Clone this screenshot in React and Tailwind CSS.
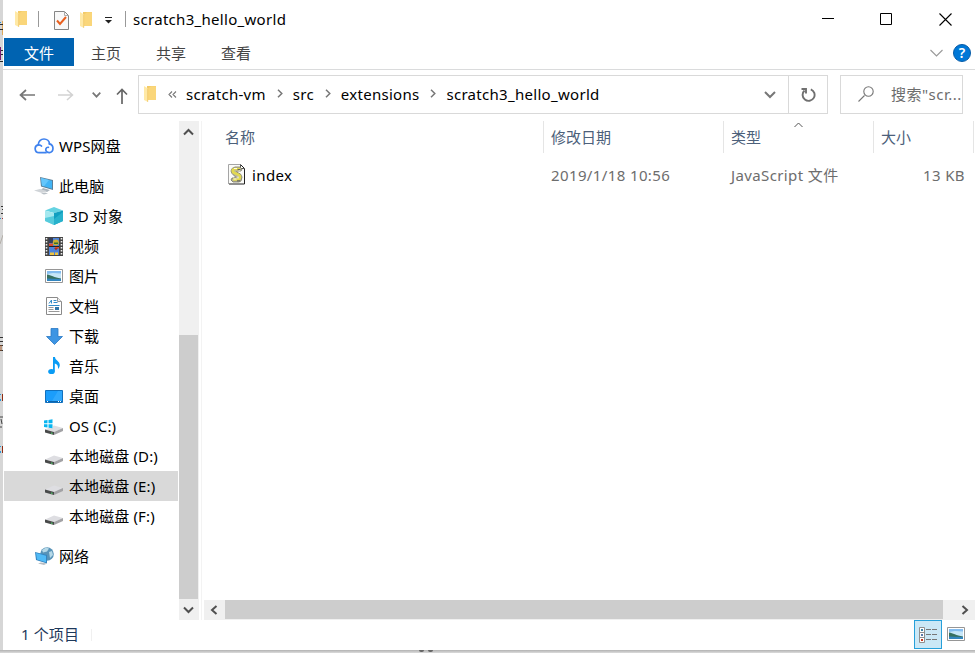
const FolderIcon = ({ className = '' }) => (
    <svg width="14" height="18" viewBox="0 0 14 18" className={`shrink-0 ${className}`}>
        <path d="M4 1h9v14H4z" fill="#f3cb68" />
        <path d="M5 3.5L8 1.200H13v13.800H5z" fill="#fad67a" />
        <path d="M1 1l4 2.500V17L1 15z" fill="#ffe9a6" />
        <path d="M4.700 3.500V16.800" stroke="#edc463" strokeWidth=".8" />
    </svg>
);

// Simple stroked glyph used for every arrow and chevron
const Stroke = ({ d, w, h, color = '#666', width = 1.5, className = '' }) => (
    <svg width={w} height={h} viewBox={`0 0 ${w} ${h}`} className={`shrink-0 ${className}`}>
        <path d={d} fill="none" stroke={color} strokeWidth={width} />
    </svg>
);

const CloudIcon = () => (
    <svg width="20" height="18" viewBox="0 0 20 18" fill="none" stroke="#3f82ee" strokeWidth="1.700" strokeLinecap="round">
        <path d="M12 15.700H5a4 4 0 0 1-.7-7.900C4.300 4.500 6.800 2 10 2c3 0 5.300 2.200 5.500 4.900" />
        <path d="M4.300 7.800c1.400-.1 2.500.3 3.200 1.200" />
        <path d="M15.300 6.900a4.500 4.500 0 0 1 .2 8.800c-2.500 0-4-1.500-3.700-3.500.3-1.400 1.400-2.200 2.600-1.900" />
    </svg>
);

const ComputerIcon = () => (
    <svg width="20" height="18" viewBox="0 0 20 18">
        <path d="M6 0l13 3v10L7 9.500z" fill="#5b7f98" />
        <path d="M7 1l11 2.700v8L8 8.800z" fill="#42b4f5" />
        <path d="M7 1l8 2-5 6.300-2-.5z" fill="#65c6fb" />
        <path d="M9 11l7 2-3 2-6-2z" fill="#aab4bc" />
        <path d="M0 13.500L6 12l7 2-5 2z" fill="#d0d4d8" />
        <path d="M7 16.500l4-1 3 1-4 1z" fill="#b8bfc5" />
    </svg>
);

const CubeIcon = () => (
    <svg width="18" height="18" viewBox="0 0 18 18">
        <path d="M0 3.500L9 0l9 3.500L9 6z" fill="#65d3e2" />
        <path d="M0 3.500L9 6v12l-9-4z" fill="#a5e8ef" />
        <path d="M18 3.500L9 6v12l9-4z" fill="#119fc0" />
        <path d="M0 11l9-2v9l-9-4z" fill="#56cbdc" />
        <path d="M9 12l9-7v9l-9 4z" fill="#27b2cc" />
    </svg>
);

const VideoIcon = () => (
    <svg width="18" height="19" viewBox="0 0 18 19">
        <path d="M0 0h18v19H0z" fill="#444" />
        <path d="M1.500 1v18M16.500 1v18" stroke="#eee" strokeWidth="1.600" strokeDasharray="1.600 1.400" />
        <path d="M4 1h10v8H4zM4 10h10v8H4z" fill="#4c83dc" />
        <path d="M4 1h4v5H4z" fill="#36405c" />
        <path d="M4 6.500h4V9H4zM10 10h4v1.500h-4z" fill="#e04b2d" />
        <circle cx="10.800" cy="5.500" r="3" fill="#cfae2e" />
        <path d="M9 5.500h4v1.500H9z" fill="#2e7035" />
        <path d="M9 11h4l-2 2.500z" fill="#a83222" />
        <path d="M5 15.500h4V18H5zM10 15.500h3V18h-3z" fill="#efc541" />
        <path d="M4 9.500h10" stroke="#222" />
    </svg>
);

const PictureIcon = ({ w = 18, h = 14 }) => (
    <svg width={w} height={h} viewBox="0 0 18 14">
        <path d="M.5.500h17v13H.5z" fill="#fff" stroke="#969696" />
        <path d="M2 2h14v10H2z" fill="#c6e6f8" />
        <path d="M2 2h14v2.500L8 4 2 5z" fill="#84bdf0" />
        <path d="M2 5.500c4 .5 7 3 14 4V11H2z" fill="#37705f" />
        <path d="M2 9.500l6 .2 8 .3v2H2z" fill="#3285bf" />
    </svg>
);

const DocIcon = () => (
    <svg width="16" height="18" viewBox="0 0 16 18">
        <path d="M.5.500h11l4 4v13H.5z" fill="#fff" stroke="#8a8a8a" />
        <path d="M11.500.500v4h4" fill="#eee" stroke="#999" />
        <path d="M3 6.500l2.500-3.500v3.500M7.500 3.500h3M7.500 5.500h4M2.500 8.500h11" fill="none" stroke="#338bc8" />
        <path d="M2.500 10.500h5M2.500 12.500h5M2.500 14.500h11" stroke="#999" />
        <path d="M9 10h4v3H9z" fill="#3276a8" />
    </svg>
);

const DownloadIcon = () => (
    <svg width="17" height="17" viewBox="0 0 17 17">
        <path d="M5 .500h7v8h4.500l-8 8-8-8H5z" fill="#3d95e3" stroke="#2878c5" strokeWidth=".8" />
    </svg>
);

const MusicIcon = () => (
    <svg width="12" height="18" viewBox="0 0 12 18" fill="#0a9cf5">
        <ellipse cx="3.500" cy="14.500" rx="3.300" ry="2.600" />
        <path d="M5 0h2c.2 3.500 4.800 4 4.800 8 0 1.500-.8 3-1.800 4 .3-3-.7-5-3.200-5.500v8H5z" />
    </svg>
);

const DesktopIcon = () => (
    <svg width="18" height="13" viewBox="0 0 18 13">
        <path d="M.5.500h17v12H.5z" fill="#1b9dfb" stroke="#1270bd" />
        <path d="M13 1h4v10H7z" fill="#45b3ff" opacity=".5" />
        <path d="M1 11.500h16" stroke="#0c65ad" />
        <path d="M2 11.500h1M13 11.500h1M15 11.500h1" stroke="#fff" />
    </svg>
);

const DriveIcon = ({ windows }) => (
    <svg width="20" height="16" viewBox="0 0 20 16" className="mt-px">
        <path d="M1 10.500l9-4 9 2.500-9 4z" fill="#dedee2" />
        <path d="M1 10.500l9 2.500v3L1 13.500z" fill="#484a4a" />
        <path d="M10 13l9-4v3L10 16z" fill="#a2a2a5" />
        <path d="M7 14l1.500.4" stroke="#4fd06a" strokeWidth="1.200" />
        {windows && (
            <>
                <path d="M0 0h9v9H0z" fill="#fff" />
                <path d="M0 1.500L3.500 1v3.300H0zM4.500.900L8.500.300v4h-4zM0 5.300h3.500v3.300L0 8zM4.500 5.300h4v4l-4-.6z" fill="#09b5f0" />
            </>
        )}
    </svg>
);

const NetworkIcon = () => (
    <svg width="19" height="18" viewBox="0 0 19 18">
        <circle cx="12" cy="7" r="6.800" fill="#5893b8" />
        <path d="M7 3l4-2.500 3 1-2 3-4 1zM14 5l3-1 1 4-3 3z" fill="#b6d9e8" />
        <path d="M0 5l12 3v8.500L1 13z" fill="#3484bf" />
        <path d="M1 6l10 2.700v6.500L2 12.500z" fill="#50baf6" />
        <path d="M6 15.500l6 1-3 1.500-6-1.500z" fill="#b7bec4" />
    </svg>
);

const ScriptIcon = () => (
    <svg width="18" height="21" viewBox="0 0 18 21" className="mb-0.5">
        <path d="M1 .500h11.500l4 4V20H1z" fill="#fbfbf8" />
        <path d="M.5 20V.500H12" fill="none" stroke="#a5a5a5" />
        <path d="M12.500.500l4 4V20H1" fill="none" stroke="#222" />
        <path d="M12.500.500v4h4" fill="none" stroke="#555" />
        <path d="M4 4.500l3-1.500h5l2 2-1 2H9.500l-1 1 4 2 1.500 3-1 4-2 1H5l-2-2 1-2h3v-1.500L4 9.500 3 7z" fill="#b5b3a0" stroke="#77755c" strokeWidth=".8" />
        <path d="M12 5H7C4 5 4 8 6.500 9l3 1.200c3.500 1.200 3 5.300 0 5.300H5" fill="none" stroke="#e2d94f" strokeWidth="2.600" />
        <path d="M6 4.500h3M10.500 6h2M5.500 15h3M10 12.500v2" stroke="#fff" strokeWidth=".9" />
        <path d="M9.500 5.500h3M9 16.800h3" stroke="#555" strokeWidth=".9" />
    </svg>
);

const places = [
    { name: '3D 对象', icon: <CubeIcon /> },
    { name: '视频', icon: <VideoIcon /> },
    { name: '图片', icon: <PictureIcon /> },
    { name: '文档', icon: <DocIcon /> },
    { name: '下载', icon: <DownloadIcon /> },
    { name: '音乐', icon: <MusicIcon /> },
    { name: '桌面', icon: <DesktopIcon /> },
    { name: 'OS (C:)', icon: <DriveIcon windows /> },
    { name: '本地磁盘 (D:)', icon: <DriveIcon /> },
    { name: '本地磁盘 (E:)', icon: <DriveIcon />, active: true },
    { name: '本地磁盘 (F:)', icon: <DriveIcon /> },
];

const NavItem = ({ icon, name, root, active }) => (
    <div className={`flex h-[30px] w-[174px] items-center ${root ? 'pl-[29px]' : 'pl-[39px]'} ${active ? 'bg-[#d9d9d9]' : ''}`}>
        <span className="flex w-[22px] shrink-0 justify-center">{icon}</span>
        <span className="ml-1 whitespace-nowrap tracking-[0.12px]">{name}</span>
    </div>
);

const TitleBar = () => (
    <header className="flex h-[38px] shrink-0 items-center">
        <FolderIcon className="ml-[11px]" />
        <span className="ml-[10px] h-4 w-px bg-[#999]" />
        <svg width="15" height="19" viewBox="0 0 15 19" className="ml-[15px] mt-0.5">
            <path d="M.5.500h10l4 4v14H.5z" fill="#f8f8f8" stroke="#858585" />
            <path d="M10.500.500v4h4" fill="none" stroke="#aaa" />
            <path d="M3 9.500l3 3.500 6-7" fill="none" stroke="#e9601f" strokeWidth="2" />
        </svg>
        <FolderIcon className="ml-[10px] mt-0.5" />
        <svg width="8" height="7" viewBox="0 0 8 7" className="ml-3 mt-0.5">
            <path d="M0 .500h7" stroke="#222" />
            <path d="M0 3h7L3.500 6.500z" fill="#222" />
        </svg>
        <span className="ml-[12px] h-4 w-px bg-[#999]" />
        <h1 className="ml-[7px] tracking-[0.3px]">scratch3_hello_world</h1>
        <div className="ml-auto flex items-center pr-[23px]">
            <Stroke w={12} h={12} d="M0 5.500h12" color="#000" width={1} />
            <Stroke w={12} h={12} d="M.5.500h11v11H.5z" color="#000" width={1} className="ml-[46px]" />
            <Stroke w={13} h={13} d="M.5.500l12 12M12.500.500l-12 12" color="#000" width={1.1} className="ml-[47px]" />
        </div>
    </header>
);

const Ribbon = () => (
    <nav className="flex h-8 shrink-0 items-center border-b border-[#dadbdc] pb-0.5 pl-px text-[#444]">
        <span className="flex h-7 w-[70px] items-center justify-center self-start bg-[#0063b1] pt-px text-white">文件</span>
        <span className="ml-[17px]">主页</span>
        <span className="ml-[35px]">共享</span>
        <span className="ml-[35px]">查看</span>
        <Stroke w={13} h={8} d="M.5 1l6 6 6-6" color="#999" width={1.1} className="ml-auto" />
        <span className="ml-[10px] mr-1 flex size-[18px] items-center justify-center rounded-full border border-[#075ca8] bg-[#0078d7] text-[14px] font-semibold text-white">?</span>
    </nav>
);

const Crumb = ({ children }) => (
    <>
        <span className="mb-0.5 tracking-[0.27px]">{children}</span>
        <Stroke w={6} h={9} d="M1 .700l3.800 3.800L1 8.300" color="#777" className="mb-[3px] ml-[11px] mr-[10px]" />
    </>
);

const AddressBar = () => (
    <div className="flex h-[51px] shrink-0 pt-[5px]">
        <div className="flex h-[39px] w-[135px] items-center">
            <Stroke w={16} h={12} d="M7 1L1.500 6 7 11M2 6h14" color="#777" width={1.7} className="ml-[16px]" />
            <Stroke w={16} h={12} d="M9 1l5.500 5L9 11M14 6H0" color="#d2d2d2" className="ml-[23px]" />
            <Stroke w={9} h={6} d="M.7.700l3.800 4L8.300.700" color="#777" width={1.7} className="ml-[18px]" />
            <Stroke w={12} h={16} d="M1 6.500L6 1.500l5 5M6 2v14" color="#666" width={1.7} className="ml-[15px] mt-0.5" />
        </div>
        <div className="flex h-[39px] w-[690px] items-center border border-[#d9d9d9] pl-1">
            <FolderIcon className="mb-0.5" />
            <Stroke w={9} h={7} d="M4 .500l-3 3 3 3M8 .500l-3 3 3 3" color="#777" width={1.1} className="ml-[11px]" />
            <span className="w-[9px]" />
            <Crumb>scratch-vm</Crumb>
            <Crumb>src</Crumb>
            <Crumb>extensions</Crumb>
            <span className="mb-0.5 tracking-[0.3px]">scratch3_hello_world</span>
            <Stroke w={12} h={8} d="M1 1l5 5 5-5" color="#777" width={2} className="ml-auto mr-3" />
            <div className="flex h-full w-[39px] items-center justify-center border-l border-[#d9d9d9]">
                <svg width="16" height="16" viewBox="0 0 16 16" fill="none" stroke="#707070" strokeWidth="1.900">
                    <path d="M10.800 2.300A6 6 0 1 1 4.500 3.500M1.500 2h4.500v4.500" />
                </svg>
            </div>
        </div>
        <div className="ml-3 flex h-[39px] w-[123px] items-center overflow-hidden whitespace-nowrap border border-[#d9d9d9] pl-[17px] text-[#6d6d6d]">
            <Stroke w={16} h={16} d="M6.500 9.500L.500 15.500M10.500 .800a4.700 4.700 0 1 1 0 9.400 4.700 4.700 0 0 1 0-9.400" color="#777" width={1.1} className="mb-0.5" />
            <span className="mb-0.5 ml-[17px] tracking-[0.5px]">搜索"scr...</span>
        </div>
    </div>
);

const NavPane = () => (
    <aside className="flex w-[196px] shrink-0">
        <div className="w-[176px] pl-px pt-[10px]">
            <NavItem root icon={<CloudIcon />} name="WPS网盘" />
            <div className="h-[10px]" />
            <NavItem root icon={<ComputerIcon />} name="此电脑" />
            {places.map((p) => (
                <NavItem key={p.name} {...p} />
            ))}
            <div className="h-[10px]" />
            <NavItem root icon={<NetworkIcon />} name="网络" />
        </div>
        <div className="flex w-5 flex-col bg-[#f0f0f0]">
            <div className="flex h-[214px] pl-1 pt-[7px]">
                <Stroke w={11} h={8} d="M1 6.500L5.500 2 10 6.500" color="#505050" width={2} />
            </div>
            <div className="h-[264px] w-[19px] bg-[#cdcdcd]" />
            <div className="flex h-[21px] items-center pl-1">
                <Stroke w={11} h={8} d="M1 1.500L5.500 6 10 1.500" color="#505050" width={2} />
            </div>
        </div>
    </aside>
);

const FilePane = () => (
    <main className="ml-0.5 flex w-[774px] flex-col border-l border-[#f3f3f3]">
        <div className="flex h-8 text-[#4c607a]">
            <div className="flex w-[342px] items-center border-r border-[#e5e5e5] pl-[23px]">名称</div>
            <div className="flex w-[180px] items-center border-r border-[#e5e5e5] pl-[7px]">修改日期</div>
            <div className="relative flex w-[150px] items-center border-r border-[#e5e5e5] pl-[7px]">
                类型
                <Stroke w={9} h={6} d="M.5 5l4-4 4 4" color="#555" width={1} className="absolute left-[70px] top-px" />
            </div>
            <div className="flex w-[100px] items-center border-r border-[#e5e5e5] pl-[7px]">大小</div>
        </div>
        <div className="flex h-11 items-center tracking-[0.38px] text-[#6d6d6d]">
            <div className="flex w-[342px] items-center pl-[26px] text-black">
                <ScriptIcon />
                <span className="ml-1.5">index</span>
            </div>
            <div className="w-[180px] pl-[7px]">2019/1/18 10:56</div>
            <div className="w-[150px] pl-[7px]">JavaScript 文件</div>
            <div className="w-[91px] text-right">13 KB</div>
        </div>
        <div className="mt-auto ml-0.5 flex h-5 items-center bg-[#f0f0f0]">
            <div className="flex w-[21px] pl-1.5">
                <Stroke w={8} h={10} d="M6.500 1L2 5l4.500 4" color="#505050" width={2} />
            </div>
            <div className="h-[19px] w-[718px] self-start bg-[#cdcdcd]" />
            <Stroke w={8} h={10} d="M1.500 1L6 5 1.500 9" color="#505050" width={2} className="ml-[18px]" />
        </div>
    </main>
);

const StatusBar = () => (
    <footer className="flex h-[30px] shrink-0 items-center text-[#1e395b]">
        <span className="mb-0.5 ml-[18px] tracking-[0.1px]">1 个项目</span>
        <span className="ml-3 h-3 w-px bg-[#f0f0f0]" />
        <div className="ml-auto flex h-[29px] w-7 items-center justify-center self-start border border-[#26a0da] bg-[#cbe8f6]">
            <svg width="18" height="16" viewBox="0 0 18 16">
                <path d="M.5.500h5v15h-5zM.5 5.500h5M.5 10.500h5" fill="#fff" stroke="#8f8f8f" />
                <path d="M2 2h2v2H2z" fill="#3d84a8" />
                <path d="M2 7h2v2H2z" fill="#5b7bab" />
                <path d="M2 12h2v2H2z" fill="#c9341e" />
                <path d="M7 2.500h5M13 2.500h5M7 7.500h5M13 7.500h5M7 12.500h5M13 12.500h5" stroke="#777" />
            </svg>
        </div>
        <span className="mb-0.5 ml-[5px] mr-[10px]"><PictureIcon /></span>
    </footer>
);

// Sliver of the window that lies behind, only a few pixels of it show
const BackEdge = () => (
    <svg width="3" height="650" viewBox="0 0 3 650" className="shrink-0 bg-[#d6d6d6]">
        <path d="M2 21h1v14H2z" fill="#dca85c" />
        <path d="M0 22h1v1H0zM0 218h1v1H0z" fill="#2c8fce" />
        <path d="M0 24h3v1H0zM0 29h3v1H0zM0 50h3v1H0zM0 54h3v1H0zM0 61h3v1H0z" fill="#2a2a2a" />
        <path d="M0 47h1v13H0z" fill="#7a1b73" />
        <path d="M1 206h2v1H1zM2 209h1v1H2zM1 213h2v1H1zM0 337h3v1H0zM0 341h3v1H0zM0 345h3v1H0zM0 350h3v1H0z" fill="#333" />
        <path d="M2 218h1v1H2z" fill="#a33" />
        <path d="M3 235L0 244" stroke="#b5b0aa" />
        <path d="M0 345h2v6H0z" fill="#a05a2c" opacity=".5" />
        <path d="M0 394h1v1H0zM0 399h1v2H0zM0 446h1v1H0zM0 451h1v2H0z" fill="#2c9ada" />
        <path d="M2 394h1v7H2zM2 446h1v7H2z" fill="#8f2d14" />
        <path d="M0 417h3M1 419l1 5M0 427h2" stroke="#444" />
    </svg>
);

export default function App() {
    return (
        <div className="flex h-[653px] w-[975px] flex-col overflow-hidden bg-[#c9c9c9] font-['Noto_Sans','Noto_Sans_CJK_SC',sans-serif] text-[15px] leading-5 text-black">
            <div className="flex h-[650px] shrink-0">
                <BackEdge />
                <div className="flex w-[972px] flex-col overflow-hidden bg-white">
                    <TitleBar />
                    <Ribbon />
                    <AddressBar />
                    <div className="flex h-[499px] shrink-0">
                        <NavPane />
                        <FilePane />
                    </div>
                    <StatusBar />
                </div>
            </div>
            <div className="flex h-[3px] bg-gradient-to-b from-[#b2b2b2] to-[#dcdcdc] pl-[419px]">
                <span className="h-0.5 w-[5px] rounded-b-full bg-[#666]" />
                <span className="ml-1 h-0.5 w-[5px] rounded-b-full bg-[#666]" />
            </div>
        </div>
    );
}
